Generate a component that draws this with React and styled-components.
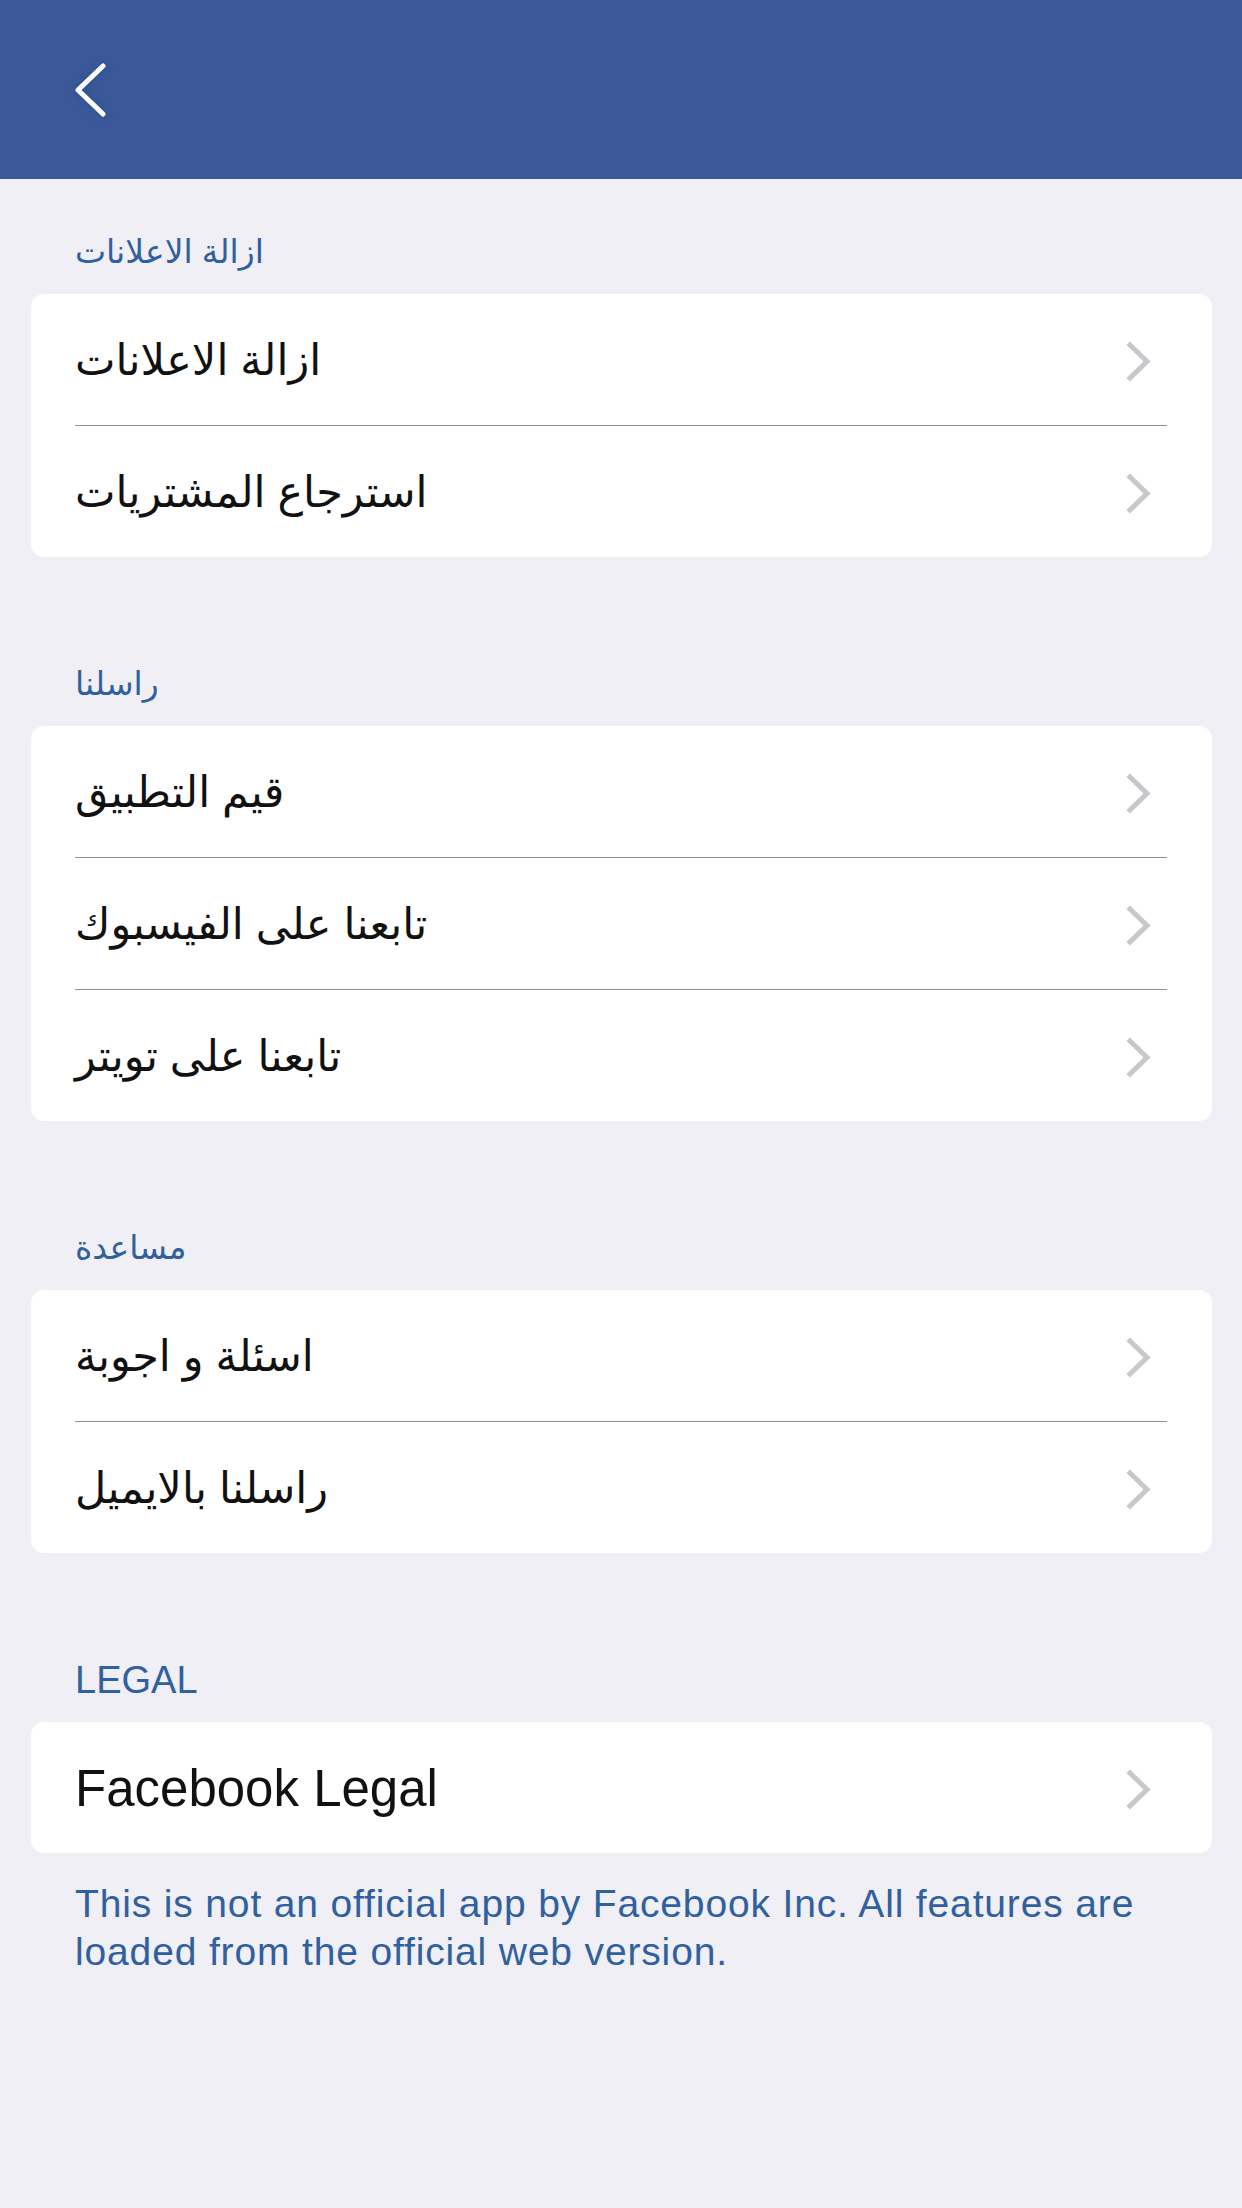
import React from "react";
import styled, { createGlobalStyle } from "styled-components";

const Global = createGlobalStyle`
  html, body { margin: 0; padding: 0; background: #efeff5; }
  body { font-family: "Liberation Sans", "DejaVu Sans", Arial, sans-serif; -webkit-font-smoothing: antialiased; }
  * { box-sizing: border-box; }
`;

const Page = styled.div`
  min-height: 2208px;
  background: #efeff5;
  display: flex;
  flex-direction: column;
`;

const NavBar = styled.header`
  height: 179px;
  background: #3b5998;
  display: flex;
  align-items: flex-start;
  padding: 62px 0 0 73px;
`;

const BackButton = styled.button`
  border: 0;
  background: transparent;
  padding: 0;
  width: 36px;
  height: 56px;
  display: flex;
  align-items: center;
  justify-content: center;
  cursor: pointer;
  filter: drop-shadow(0 0 4px rgba(20, 70, 130, 0.55));
`;

const Section = styled.section`
  padding-top: 50px;
  & + & { margin-top: 54px; }
`;

const SectionLabel = styled.div`
  font-size: ${(p) => (p.$arabic ? "33px" : "38px")};
  height: 46px;
  line-height: 46px;
  color: #30609d;
  padding: 0 75px;
  margin-bottom: 19px;
  font-family: "Liberation Sans", "DejaVu Sans", sans-serif;
`;

const Card = styled.div`
  margin: 0 30px 0 31px;
  background: #ffffff;
  border-radius: 13px;
  display: flex;
  flex-direction: column;
  overflow: hidden;
`;

const Row = styled.div`
  height: 131px;
  display: flex;
  align-items: center;
  justify-content: space-between;
  padding: 3px 60px 0 44px;
`;

const RowLabel = styled.span`
  font-size: ${(p) => (p.$arabic ? "43px" : "51px")};
  color: #111111;
  line-height: 1.1;
  font-family: "Liberation Sans", "DejaVu Sans", sans-serif;
`;

const Divider = styled.div`
  height: 1px;
  background: #8e8e93;
  margin: 0 45px 0 44px;
`;

const Footer = styled.p`
  margin: 27px 0 0;
  padding: 0 60px 0 75px;
  font-size: 39px;
  line-height: 48px;
  letter-spacing: 0.85px;
  color: #30609d;
`;

const BackIcon = () => (
  <svg width="32" height="54" viewBox="0 0 32 54">
    <path d="M28 3 L3 27 L28 51" fill="none" stroke="#fff" strokeWidth="5" strokeLinecap="round" strokeLinejoin="round" />
  </svg>
);

const Chevron = () => (
  <svg width="26" height="41" viewBox="0 0 26 41">
    <path d="M4 4 L21 20.5 L4 37" fill="none" stroke="#c7c7cc" strokeWidth="5" strokeLinecap="square" strokeLinejoin="miter" />
  </svg>
);

const isArabic = (s) => /[\u0600-\u06FF]/.test(s);

const sections = [
  { title: "ازالة الاعلانات", items: ["ازالة الاعلانات", "استرجاع المشتريات"] },
  { title: "راسلنا", items: ["قيم التطبيق", "تابعنا على الفيسبوك", "تابعنا على تويتر"] },
  { title: "مساعدة", items: ["اسئلة و اجوبة", "راسلنا بالايميل"] },
  { title: "LEGAL", items: ["Facebook Legal"] },
];

export default function App() {
  return (
    <>
      <Global />
      <Page>
        <NavBar>
          <BackButton aria-label="Back">
            <BackIcon />
          </BackButton>
        </NavBar>
        {sections.map((s) => (
          <Section key={s.title}>
            <SectionLabel $arabic={isArabic(s.title)}>{s.title}</SectionLabel>
            <Card>
              {s.items.map((item, i) => (
                <React.Fragment key={item}>
                  {i > 0 && <Divider />}
                  <Row>
                    <RowLabel $arabic={isArabic(item)}>{item}</RowLabel>
                    <Chevron />
                  </Row>
                </React.Fragment>
              ))}
            </Card>
          </Section>
        ))}
        <Footer>
          This is not an official app by Facebook Inc. All features are loaded from the official web version.
        </Footer>
      </Page>
    </>
  );
}
